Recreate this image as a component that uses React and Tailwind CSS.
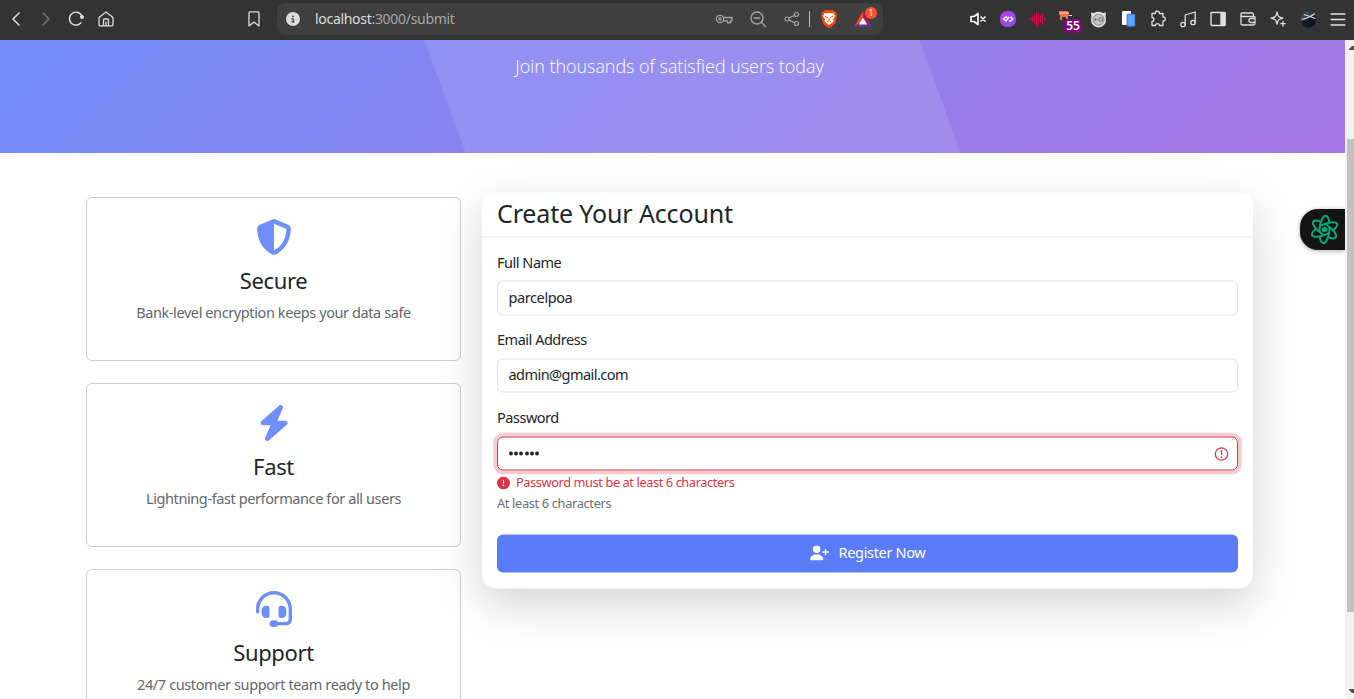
import React from "react";
import { FaShieldHalved, FaBolt, FaHeadset, FaUserPlus, FaCircleExclamation, FaCircleInfo } from "react-icons/fa6";

function Slot({ children }) {
  return <div className="relative flex h-[38px] w-[30px] shrink-0 items-center justify-center">{children}</div>;
}

function Line({ children, size = 18, color = "#dedede", sw = 1.3 }) {
  return (
    <svg width={size} height={size} viewBox="0 0 18 18" fill="none" stroke={color} strokeWidth={sw} strokeLinecap="round" strokeLinejoin="round">
      {children}
    </svg>
  );
}

function Toolbar() {
  return (
    <header className="flex h-10 w-full shrink-0 items-start bg-[#333333] pl-px">
      <Slot><Line sw={1.5}><path d="M12 3 6 9l6 6" /></Line></Slot>
      <Slot><Line color="#777777" sw={1.5}><path d="m6 3 6 6-6 6" /></Line></Slot>
      <Slot>
        <Line sw={1.4}><path d="M14 12.800A6.500 6.500 0 1 1 15 6.300" /><circle cx="15" cy="7" r="1.300" fill="#dedede" /></Line>
      </Slot>
      <Slot>
        <Line><path d="M2 7.500 9 2l7 5.500v7a1.300 1.300 0 0 1-1.300 1.300H3.300A1.300 1.300 0 0 1 2 14.500zM6.500 15.500V10a1 1 0 0 1 1-1h3a1 1 0 0 1 1 1v5.500M9 12v3.500" /></Line>
      </Slot>
      <div className="ml-[118px] flex h-[38px] w-[30px] items-center justify-center">
        <Line><path d="M4 2.900a1 1 0 0 1 1-1h8a1 1 0 0 1 1 1v13l-5-4-5 4z" /></Line>
      </div>
      <div className="ml-[8px] mt-[3px] flex h-8 w-[606px] items-center rounded-lg bg-[#3f3f3f] pl-[9px]">
        <FaCircleInfo className="size-[14px] text-[#dcdcdc]" />
        <div className="-mt-px ml-[15px] w-[400px] whitespace-nowrap font-['Noto_Sans'] text-[14px] tracking-[-0.3px] text-[#a6a6a6]">
          <span className="text-[#dddddd]">localhost</span>:3000/submit
        </div>
        <Line color="#a5a5a5" sw={1.3}>
          <circle cx="5" cy="9" r="3.700" /><circle cx="5" cy="9" r="1" /><path d="M8.500 7.500H17v3.300h-1.500v2h-3v-2h-4" />
        </Line>
        <div className="ml-4 flex"><Line color="#a5a5a5" sw={1.3}><circle cx="8" cy="8" r="6" /><path d="M5.500 8h5M12.500 12.500l4 4" /></Line></div>
        <div className="ml-4 flex"><Line color="#a5a5a5" sw={1.2}><circle cx="4" cy="9" r="2" /><circle cx="13.500" cy="4.500" r="2" /><circle cx="13.500" cy="13.500" r="2" /><path d="m6 8 5.500-2.600M6 10l5.500 2.600" /></Line></div>
        <div className="ml-[8px] h-4 w-px bg-[#bcbcbc]" />
        <svg className="ml-[11px]" width="16" height="18" viewBox="0 0 16 18">
          <path d="M4 0h8l1.500 1.800L15 2l1 3-1.500 7c-.4 2-3.500 4.500-6.500 6-3-1.500-6.100-4-6.500-6L0 5l1-3 1.500-.2z" fill="#ff4a0b" />
          <path d="m3.500 3 3 .2L8 2.700l1.500.5 3-.2L14 6l-2 3.500.5 2L8 15l-4.500-3.500.5-2L2 6z" fill="#fff" />
          <path d="m4 6.500 3 1M12 6.500l-3 1M6 12l2-1.200 2 1.200M8 8v2.500" stroke="#ff4a0b" strokeWidth="1" fill="none" />
        </svg>
        <div className="relative ml-[17px]">
          <svg width="18" height="17" viewBox="0 0 18 17">
            <path d="M9 0 0 16h4l5-9z" fill="#ff4724" /><path d="m9 0 9 16h-4L9 7z" fill="#9e1f63" /><path d="M0 16h18l-4-3.500H4z" fill="#662d91" /><path d="m9 6.500 4.200 7H4.800z" fill="#fff" />
          </svg>
          <span className="absolute left-[11px] top-[-4px] flex size-[12px] items-center justify-center rounded-full bg-[#ff5229] font-['Noto_Sans'] text-[8px] leading-none text-white">1</span>
        </div>
      </div>
      <div className="ml-[80px] flex">
        <Slot><Line color="#f5f5f5" sw={1.7}><path d="M2 6.500h3l4-3v11l-4-3H2zM12 7l4 4M16 7l-4 4" /></Line></Slot>
        <Slot>
          <span className="flex size-4 items-center justify-center rounded-[7px] bg-gradient-to-br from-[#bd38e8] to-[#7a4ff0]">
            <svg width="12" height="12" viewBox="0 0 12 12" fill="none" stroke="#fff" strokeWidth="1.300"><path d="M7.300 3.800 4 8 1.500 6 4 3.800 6 6.200M7 7.800 8.300 8.200 10.800 6 8.500 3.800" /></svg>
          </span>
        </Slot>
        <Slot><Line color="#c30f45" sw={1.3}><path d="M1.500 8.500v1M3.500 7v4M5.500 5v8M7.500 1.500v15M9.500 4v10M11.500 6v6M13.500 3.500v11M16 8v2" /></Line></Slot>
        <Slot>
          <svg className="mb-[7px] mr-[4px]" width="14" height="9" viewBox="0 0 14 9"><path d="M0 0h9v1h1v4H9v3H7V6H3v3H1V4H0z" fill="#e8754d" /><path d="M1 1h8v2H1z" fill="#f9a988" /><path d="M10 4h3v1h-3z" fill="#ddd" /></svg>
          <span className="absolute left-[11px] top-[19px] flex h-[14px] w-[18px] items-center justify-center rounded-[3px] bg-[#7d067d] font-['Noto_Sans'] text-[12px] font-semibold leading-none text-white">55</span>
        </Slot>
        <Slot>
          <svg width="17" height="17" viewBox="0 0 17 17"><path d="M1 1.500 4 2q4.500-2.500 9 0l3-.5-.5 4Q17 11 14 14q-5.500 5-11 0-3-3-1.500-8.500z" fill="#dedede" /><circle cx="8.500" cy="8.700" r="5.500" fill="#c4c4c4" stroke="#8a8a8a" /><path d="M4.500 8.500h3M6 7l-1.500 1.500L6 10M9 7h3.500v3H9z" fill="none" stroke="#787878" /></svg>
        </Slot>
        <Slot>
          <svg width="15" height="16" viewBox="0 0 15 16"><rect x="1" width="9" height="14" rx="1" fill="#fff" /><rect x="6" y="3" width="8" height="12.500" rx="1" fill="#59a5fa" stroke="#2b63b5" strokeWidth=".7" /></svg>
        </Slot>
        <Slot><Line sw={1.3}><path d="M3 4h3.200C5.800 1 10.800 1 10.500 4H14v3.500c3-.5 3 4.500 0 4V16h-3.500c0-2.500-4-2.500-4 0H3v-4c2.500.2 2.500-4 0-4z" transform="translate(0 -.5)" /></Line></Slot>
        <Slot><Line sw={1.3}><circle cx="4" cy="14.500" r="2.200" /><circle cx="14" cy="12.500" r="2.200" /><path d="M6.200 14.500V5l10-3v10.500" /></Line></Slot>
        <Slot><Line sw={1.4}><rect x="2" y="2.500" width="14" height="13" rx=".7" /><path d="M12 3h4v12h-4z" fill="#dedede" /></Line></Slot>
        <Slot><Line sw={1.3}><path d="M14.500 6V4.300A1.300 1.300 0 0 0 13.200 3H3.500a1.700 1.700 0 0 0 0 3.500H15a1 1 0 0 1 1 1v6A1.500 1.500 0 0 1 14.500 15h-11A1.500 1.500 0 0 1 2 13.500V5M16 8.500h-4a2 2 0 0 0 0 4h4" /></Line></Slot>
        <Slot><Line sw={1.3}><path d="M8 2c.8 4.500 1.700 5.400 6 6.200-4.300.8-5.200 1.700-6 6.200-.8-4.500-1.700-5.400-6-6.200C6.300 7.400 7.200 6.500 8 2zM14 11.500v4.500M11.800 13.700h4.400" /></Line></Slot>
        <Slot>
          <svg width="17" height="17" viewBox="0 0 17 17"><defs><linearGradient id="globe" x2="0.6" y2="1"><stop stopColor="#5d6a7c" /><stop offset=".6" stopColor="#171b24" /><stop offset="1" stopColor="#10141c" /></linearGradient></defs><circle cx="8.500" cy="8.500" r="8" fill="url(#globe)" /><path d="M1.500 8.500Q9 7 15 2.500M4 3.500l11.500 4" fill="none" stroke="#d3d6dc" strokeWidth="1.200" /></svg>
        </Slot>
        <Slot><Line sw={1.3} color="#e2e2e2"><path d="M2 4h14M2 9.500h14M2 15h14" strokeWidth="1.300" /></Line></Slot>
      </div>
    </header>
  );
}

function Feature({ Icon, title, titleClass, text, textClass }) {
  return (
    <article className="flex h-[164.400px] w-[375px] shrink-0 flex-col items-center rounded-[6px] border border-[#cdcdcd] bg-white pt-[20.500px]">
      <Icon className="size-[36px] shrink-0 text-[#6e8efb]" />
      <h3 className={`mt-[12.500px] h-[27px] whitespace-nowrap text-[22px] font-normal leading-[27px] text-[#212529] ${titleClass}`}>{title}</h3>
      <p className={`mt-[7px] whitespace-nowrap text-[14.500px] leading-[23px] text-[#62686d] ${textClass}`}>{text}</p>
    </article>
  );
}

function Field({ label, className, children }) {
  return (
    <div className={className}>
      <div className="h-[22px] whitespace-nowrap text-[14.500px] leading-[22px] tracking-[-0.480px]">{label}</div>
      {children}
    </div>
  );
}

function RegistrationCard() {
  return (
    <section className="h-[396px] w-[771px] -translate-y-[4.500px] rounded-[14px] bg-white text-[#212529] shadow-[0_15px_45px_rgba(0,0,0,0.175)]">
      <div className="flex h-[45px] items-start border-b border-[#ececec] px-[15px] pt-[4px]">
        <h2 className="whitespace-nowrap text-[25px] font-normal leading-8 tracking-[-0.150px]">Create Your Account</h2>
      </div>
      <div className="px-[15px] pt-[13px]">
        <Field label="Full Name">
          <div className="mt-[8px] flex h-[35px] items-start rounded-[6px] border border-[#dee2e6] px-[10.500px] pt-[4px] text-[14.500px] leading-[22px] tracking-[-0.4px]">parcelpoa</div>
        </Field>
        <Field label="Email Address" className="mt-[12px]">
          <div className="mt-[9px] flex h-[34px] items-start rounded-[6px] border border-[#dee2e6] px-[10.500px] pt-[3px] text-[14.500px] leading-[22px] tracking-[-0.540px]">admin@gmail.com</div>
        </Field>
        <Field label="Password" className="mt-[13px]">
          <div className="mt-[9px] flex h-[34px] items-center justify-between rounded-[6px] border border-[#dc3545] pl-[11px] pr-[8.500px] shadow-[0_0_0_3.750px_rgba(220,53,69,0.25)]">
            <div className="flex gap-[1.200px]">
              {[0, 1, 2, 3, 4, 5].map((n) => <i key={n} className="size-[4px] rounded-full bg-[#212529]" />)}
            </div>
            <svg width="15" height="15" viewBox="0 0 15 15"><circle cx="7.500" cy="7.500" r="6.200" fill="none" stroke="#dc3545" strokeWidth="1.300" /><path d="M6.600 3.800h1.800L8 8.600H7z" fill="#dc3545" /><circle cx="7.500" cy="10.600" r=".9" fill="#dc3545" /></svg>
          </div>
        </Field>
        <div className="mt-[2px] flex h-[20px] items-center text-[12.800px] text-[#dc3545]">
          <FaCircleExclamation className="size-[13px]" />
          <span className="ml-[6px] whitespace-nowrap tracking-[-0.410px]">Password must be at least 6 characters</span>
        </div>
        <div className="h-[20px] text-[12.800px] leading-5 tracking-[-0.340px] text-[#6c7278]">At least 6 characters</div>
        <button className="mt-[22px] flex h-[38px] w-full items-center justify-center rounded-[6px] bg-[#5a7df7] text-[14.500px] text-white">
          <FaUserPlus className="-mt-px h-[15px] w-[19px]" />
          <span className="-mt-[2px] ml-[10px] whitespace-nowrap tracking-[-0.340px]">Register Now</span>
        </button>
      </div>
    </section>
  );
}

function Scrollbar() {
  return (
    <div className="flex h-full w-[9px] shrink-0 flex-col items-end bg-[#f1f1f1]">
      <svg className="mt-[6px]" width="5" height="4" viewBox="0 0 5 4"><path d="M0 4V3l3-3h2v4z" fill="#505050" /></svg>
      <div className="mt-[89px] h-[473px] w-[7px] bg-[#c1c1c1]" />
      <svg className="mt-[77px]" width="5" height="4" viewBox="0 0 5 4"><path d="M0 0v1l3 3h2V0z" fill="#505050" /></svg>
    </div>
  );
}

export default function App() {
  return (
    <div className="flex h-[699px] w-[1354px] flex-col overflow-hidden bg-white font-['Noto_Sans',sans-serif]">
      <Toolbar />
      <div className="flex h-[659px]">
        <main className="relative h-full w-[1345px] overflow-hidden">
          <div className="relative -mt-[120px] flex h-[233px] justify-center overflow-hidden bg-[linear-gradient(135deg,#6e8efb,#a777e3)] pt-[133px]">
            <div className="absolute left-[445px] top-[120px] h-[113px] w-[495px] skew-x-[20deg] bg-white/10" />
            <p className="relative -left-[3px] h-[27px] whitespace-nowrap font-['Open_Sans'] text-[18px] font-light leading-[27px] tracking-[-0.050px] text-white">Join thousands of satisfied users today</p>
          </div>
          <div className="flex items-start gap-[21px] pl-[86px] pt-[44px]">
            <div className="flex flex-col gap-[21.700px]">
              <Feature Icon={FaShieldHalved} title="Secure" titleClass="tracking-[-0.350px]" text="Bank-level encryption keeps your data safe" textClass="tracking-[-0.4px]" />
              <Feature Icon={FaBolt} title="Fast" titleClass="tracking-[-0.350px]" text="Lightning-fast performance for all users" textClass="tracking-[-0.4px]" />
              <Feature Icon={FaHeadset} title="Support" titleClass="tracking-[-0.350px]" text="24/7 customer support team ready to help" textClass="tracking-[-0.390px]" />
            </div>
            <RegistrationCard />
          </div>
          <div className="absolute right-0 top-[169px] flex h-[41px] w-[45px] items-center rounded-l-[18px] bg-[#141414] pl-[10px] shadow-[0_1px_5px_rgba(0,0,0,0.35)]">
            <svg width="29" height="31" viewBox="-14.500 -15.500 29 31" fill="none" stroke="#08a67b" strokeWidth="2">
              {[5, 65, 125].map((a) => <ellipse key={a} rx="5" ry="13.700" pathLength="200" strokeDasharray="84 16" strokeDashoffset="9" transform={`rotate(${a})`} />)}
              <circle r="2.800" fill="#08a67b" stroke="none" />
            </svg>
          </div>
        </main>
        <Scrollbar />
      </div>
    </div>
  );
}
